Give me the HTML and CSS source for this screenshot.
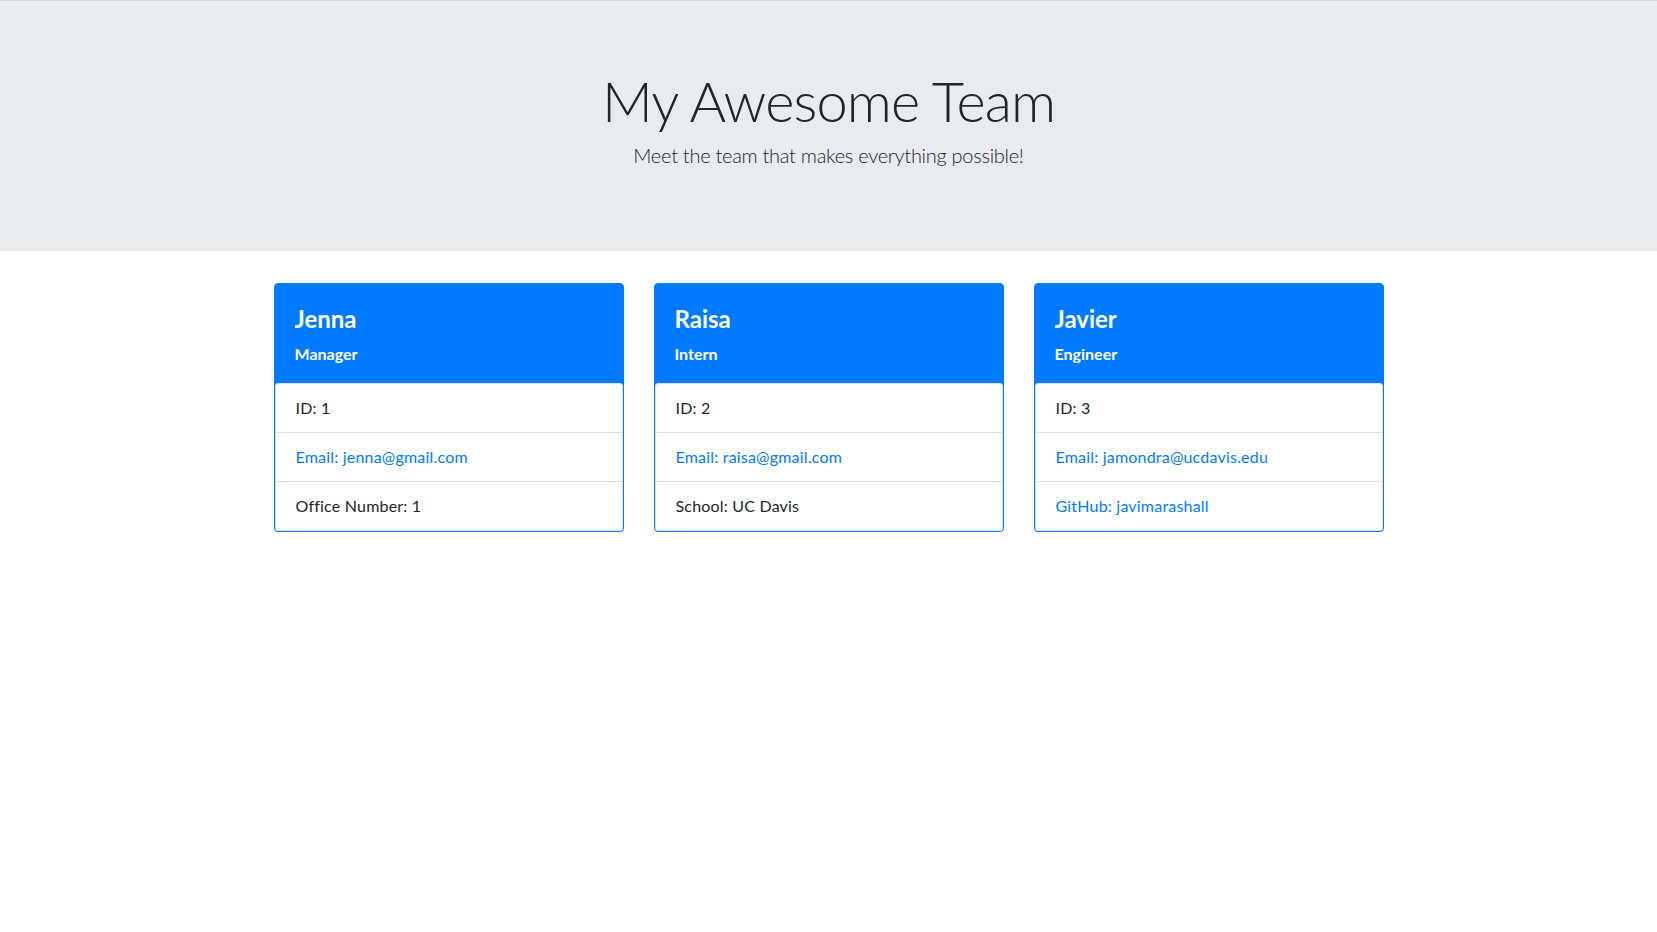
FILE: index.html
```html
<!DOCTYPE html>
<html lang="en">
<head>
<meta charset="utf-8">
<title>My Awesome Team</title>
<link rel="stylesheet" href="styles.css">
</head>
<body>
<header class="jumbotron">
  <h1 class="display">My Awesome Team</h1>
  <p class="lead">Meet the team that makes everything possible!</p>
</header>
<main class="container">
  <div class="team">
    <section class="card">
      <div class="card-head">
        <h4 class="card-title">Jenna</h4>
        <h6 class="card-role">Manager</h6>
      </div>
      <ul class="list">
        <li class="item">ID: 1</li>
        <li class="item"><a class="link" href="#">Email: jenna@gmail.com</a></li>
        <li class="item">Office Number: 1</li>
      </ul>
    </section>
    <section class="card">
      <div class="card-head">
        <h4 class="card-title">Raisa</h4>
        <h6 class="card-role">Intern</h6>
      </div>
      <ul class="list">
        <li class="item">ID: 2</li>
        <li class="item"><a class="link" href="#">Email: raisa@gmail.com</a></li>
        <li class="item">School: UC Davis</li>
      </ul>
    </section>
    <section class="card">
      <div class="card-head">
        <h4 class="card-title">Javier</h4>
        <h6 class="card-role">Engineer</h6>
      </div>
      <ul class="list">
        <li class="item">ID: 3</li>
        <li class="item"><a class="link" href="#">Email: jamondra@ucdavis.edu</a></li>
        <li class="item"><a class="link" href="#">GitHub: javimarashall</a></li>
      </ul>
    </section>
  </div>
</main>
</body>
</html>
```
FILE: styles.css
```css
* { box-sizing: border-box; }
html, body { margin: 0; padding: 0; }
body {
  font-family: "Segoe UI", Lato, "Liberation Sans", Arial, sans-serif;
  font-size: 16px;
  line-height: 1.5;
  color: #212529;
  background: #fff;
}
.jumbotron {
  background: #e9ecef;
  border-top: 1px solid #d9d9d9;
  padding: 66px 32px 81px;
  margin: 0 0 32px;
  text-align: center;
}
.display {
  margin: 0 0 6px;
  font-size: 56px;
  font-weight: 300;
  line-height: 1.2;
  letter-spacing: -0.9px;
}
.lead {
  margin: 0;
  font-size: 20px;
  font-weight: 300;
  line-height: 30px;
  letter-spacing: -0.28px;
}
.container {
  max-width: 1140px;
  margin: 0 auto;
  padding: 0 15px;
}
.team {
  display: grid;
  grid-template-columns: repeat(3, 1fr);
  gap: 30px;
}
.card {
  background: #007bff;
  border: 1px solid #007bff;
  border-radius: 4px;
  overflow: hidden;
}
.card-head {
  padding: 21px 20px 20px;
  color: #fff;
}
.card-title {
  margin: 0 0 10px;
  font-size: 24px;
  font-weight: 700;
  line-height: 28.8px;
}
.card-role {
  margin: 0;
  font-size: 16px;
  font-weight: 700;
  line-height: 19.2px;
}
.list {
  list-style: none;
  margin: 0;
  padding: 0;
  background: #fff;
  border-radius: 4px 4px 3px 3px;
  overflow: hidden;
}
.item {
  padding: 12px 20px;
  line-height: 24px;
  letter-spacing: 0.2px;
  border: 1px solid rgba(0, 0, 0, 0.125);
  border-top-width: 0;
  background: #fff;
}
.item:first-child {
  border-top-width: 1px;
  border-radius: 4px 4px 0 0;
}
.link {
  color: #007bff;
  text-decoration: none;
}
```
